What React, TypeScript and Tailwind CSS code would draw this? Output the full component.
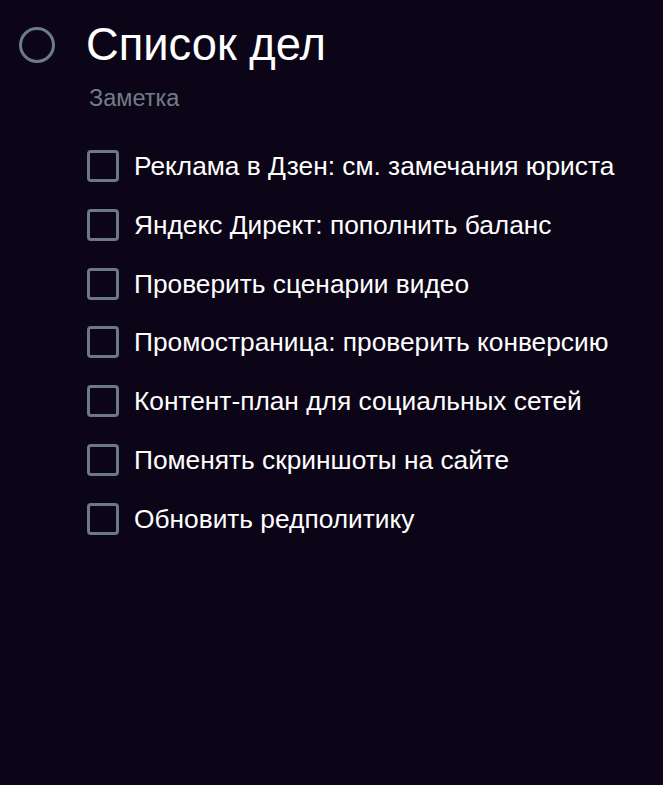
import React from "react";

const items = [
  "Реклама в Дзен: см. замечания юриста",
  "Яндекс Директ: пополнить баланс",
  "Проверить сценарии видео",
  "Промостраница: проверить конверсию",
  "Контент-план для социальных сетей",
  "Поменять скриншоты на сайте",
  "Обновить редполитику",
];

export default function App() {
  return (
    <div
      className="w-[663px] h-[785px] bg-[#0c0517] text-white overflow-hidden"
      style={{ fontFamily: '"Liberation Sans", Arial, sans-serif' }}
    >
      <div className="flex items-center pt-[19px] pl-[19px]">
        <div className="w-[36px] h-[36px] rounded-full border-[3px] border-[#6a7c87] shrink-0" />
        <div className="ml-[31px] text-[45.3px] leading-[52px] text-white whitespace-nowrap">Список дел</div>
      </div>
      <div className="pl-[89px] mt-[13px] text-[23.5px] leading-[28px] text-[#717d89]">Заметка</div>
      <div className="flex flex-col pl-[87px] mt-[38px] gap-[26.8px]">
        {items.map((t) => (
          <div key={t} className="flex items-center h-[32px]">
            <div className="w-[32px] h-[32px] rounded-[4px] border-[3px] border-[#6d7886] shrink-0" />
            <div className="ml-[15px] text-[26.3px] leading-[30px] text-white whitespace-nowrap">{t}</div>
          </div>
        ))}
      </div>
    </div>
  );
}
